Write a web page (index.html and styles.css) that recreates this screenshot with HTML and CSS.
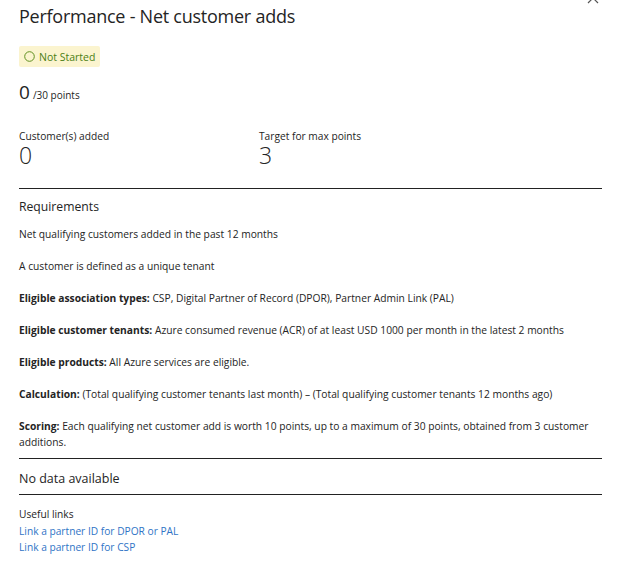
FILE: index.html
```html
<!DOCTYPE html>
<html>
<head>
<meta charset="utf-8">
<link rel="stylesheet" href="styles.css">
</head>
<body>
<div class="panel">
  <button class="close" aria-label="Close">
    <svg width="12" height="12" viewBox="0 0 12 12"><path d="M1 1 L11 11 M11 1 L1 11" stroke="#555" stroke-width="1.2" fill="none"/></svg>
  </button>
  <h1 class="title">Performance - Net customer adds</h1>
  <div class="badge-row">
    <span class="badge">
      <svg class="badge-icon" width="11" height="11" viewBox="0 0 11 11"><circle cx="5.5" cy="5.5" r="4.8" stroke="#5f8f1f" stroke-width="1" fill="none"/></svg>
      Not Started
    </span>
  </div>
  <div class="score"><span class="score-num">0</span><span class="score-total">/30 points</span></div>
  <div class="stats">
    <div class="stat">
      <div class="stat-label">Customer(s) added</div>
      <div class="stat-value">0</div>
    </div>
    <div class="stat">
      <div class="stat-label">Target for max points</div>
      <div class="stat-value">3</div>
    </div>
  </div>
  <div class="section">
    <h2 class="section-title">Requirements</h2>
    <p>Net qualifying customers added in the past 12 months</p>
    <p>A customer is defined as a unique tenant</p>
    <p><b>Eligible association types:</b> CSP, Digital Partner of Record (DPOR), Partner Admin Link (PAL)</p>
    <p><b>Eligible customer tenants:</b> Azure consumed revenue (ACR) of at least USD 1000 per month in the latest 2 months</p>
    <p><b>Eligible products:</b> All Azure services are eligible.</p>
    <p><b>Calculation:</b> (Total qualifying customer tenants last month) – (Total qualifying customer tenants 12 months ago)</p>
    <p class="last"><b>Scoring:</b> Each qualifying net customer add is worth 10 points, up to a maximum of 30 points, obtained from 3 customer additions.</p>
  </div>
  <div class="nodata">No data available</div>
  <div class="links">
    <div class="links-label">Useful links</div>
    <a href="#">Link a partner ID for DPOR or PAL</a>
    <a href="#">Link a partner ID for CSP</a>
  </div>
</div>
</body>
</html>
```
FILE: styles.css
```css
html, body {
  margin: 0;
  padding: 0;
  background: #fff;
}
body {
  font-family: "Open Sans", "Noto Sans", sans-serif;
  color: #242424;
}
.panel {
  position: relative;
  width: 583px;
  padding: 0 0 0 19px;
}
.close {
  position: absolute;
  left: 587px;
  top: -8px;
  border: 0;
  background: none;
  padding: 0;
}
.title {
  margin: 0;
  padding-top: 4px;
  font-size: 18px;
  letter-spacing: -0.25px;
  font-weight: 400;
  line-height: 25px;
  height: 25px;
}
.badge-row {
  margin-top: 17px;
  display: flex;
}
.badge {
  display: inline-flex;
  align-items: center;
  gap: 4px;
  background: #fbf4cf;
  color: #4c7f14;
  font-size: 10.5px;
  height: 21px;
  padding: 0 5px 0 5px;
  border-radius: 2px;
}
.score {
  margin-top: 12px;
  display: flex;
  align-items: baseline;
  gap: 3px;
  height: 28px;
}
.score-num {
  font-size: 19px;
  font-weight: 500;
}
.score-total {
  font-size: 10px;
}
.stats {
  margin-top: 22px;
  display: grid;
  grid-template-columns: 240px 1fr;
}
.stat-label {
  font-size: 10.2px;
  line-height: 14px;
}
.stat-value {
  font-size: 23px;
  line-height: 24px;
  font-weight: 300;
}
.section {
  margin-top: 21px;
  border-top: 1px solid #222;
  border-bottom: 1px solid #222;
  padding-top: 9px;
  padding-bottom: 8px;
}
.section-title {
  margin: 0 0 11px;
  font-size: 12.2px;
  font-weight: 400;
  line-height: 17px;
}
.section p {
  margin: 0 0 16px;
  font-size: 10.25px;
  line-height: 16px;
}
.section p.last {
  margin-bottom: 0;
}
.section b {
  font-weight: 700;
}
.nodata {
  font-size: 12.5px;
  line-height: 17px;
  padding: 11px 0 7px;
  border-bottom: 1px solid #222;
}
.links {
  padding-top: 11px;
  display: flex;
  flex-direction: column;
  font-size: 10.2px;
  line-height: 16.5px;
}
.links a {
  color: #2f74c6;
  text-decoration: none;
}
```
